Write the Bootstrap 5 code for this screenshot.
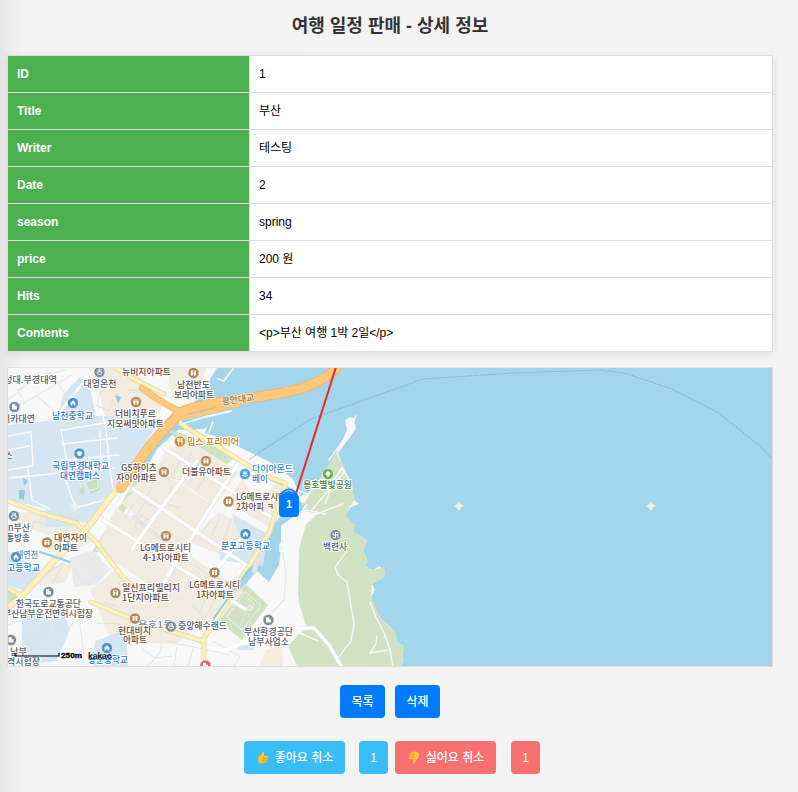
<!DOCTYPE html>
<html lang="ko">
<head>
<meta charset="utf-8">
<meta name="viewport" content="width=device-width, initial-scale=1">
<title>여행 일정 판매 - 상세 정보</title>
<link href="https://cdn.jsdelivr.net/npm/bootstrap@5.3.0/dist/css/bootstrap.min.css" rel="stylesheet">
<style>
body{background:linear-gradient(to right,#e6e6e6,#ececec 8px,#f3f3f3 22px,#f4f4f4);font-family:"Liberation Sans","Noto Sans CJK KR",sans-serif;font-size:12px;color:#000;min-height:792px;overflow:hidden}
.page{width:766px;margin-left:7px}
.page-title{font-size:18px;line-height:26px;padding-top:13px;margin-bottom:16px;color:#333}
.detail{border-collapse:collapse;table-layout:fixed;background:#fff;box-shadow:0 2px 8px rgba(0,0,0,.1);margin-bottom:15px;line-height:18px}
.detail th,.detail td{border:1px solid #ddd;height:37px;padding:0 9px;vertical-align:middle}
.detail th{width:242px;background:#4caf50;color:#fff}
.map-box{border:1px solid #ddd;height:300px;margin-bottom:18px}
.act{height:33px;border:0;border-radius:4px;font-size:12px;font-weight:500;padding:0;color:#fff;display:flex;align-items:center;justify-content:center;line-height:18px}
.act-main{background:#007bff;width:45px}
.like{background:#38bdf8}.dislike{background:#f87171}
.vote{width:101px;gap:6px;padding-left:1px}.count{width:29px}
.btns{gap:10px;margin-bottom:23px}
.votes{padding-left:4px}
.vote.like{margin-right:14px}
.vote.dislike{margin-left:7px;margin-right:15px}
.lbl{font-family:"Noto Sans CJK KR",sans-serif;font-size:9.2px;font-weight:500;paint-order:stroke;stroke:#fff;stroke-width:2px;stroke-linejoin:round}
</style>
<script src="https://cdn.jsdelivr.net/npm/bootstrap@5.3.0/dist/js/bootstrap.bundle.min.js"></script>
</head>
<body>
<main class="page">
<h1 class="page-title text-center fw-bold">여행 일정 판매 - 상세 정보</h1>
<table class="detail w-100">
<tbody>
<tr><th>ID</th><td>1</td></tr>
<tr><th>Title</th><td>부산</td></tr>
<tr><th>Writer</th><td>테스팅</td></tr>
<tr><th>Date</th><td>2</td></tr>
<tr><th>season</th><td>spring</td></tr>
<tr><th>price</th><td>200 원</td></tr>
<tr><th>Hits</th><td>34</td></tr>
<tr><th>Contents</th><td>&lt;p&gt;부산 여행 1박 2일&lt;/p&gt;</td></tr>
</tbody>
</table>
<div class="map-box">
<svg class="d-block" width="764" height="298" viewBox="8 368 764 298" fill="none" stroke-linecap="round" stroke-linejoin="round">
<rect x="8" y="368" width="764" height="298" fill="#a3d5eb"/>
<!-- land -->
<path fill="#f8f8f8" d="M8 368H217L208 382 190 408 176 421 148 456 128 488 146 468 158 448 178 430 204 429 207 427 205 433 221 438 270 462 293 479 300 496 308 494 321 478 337 452 347 430 345 420 350 417 354 418 356 429 338 453 343 466 352 485 354 500 359 504 351 507 345 515 348 522 355 525 353 531 361 537 367 540 363 550 367 560 365 566 373 570 380 566 385 572 384 577 372 584 375 590 371 597 374 609 381 619 387 624 395 632 397 643 404 646 400 653 403 660 401 666H8Z"/>
<path fill="#a3d5eb" d="M292 498L305 504 302 511 294 516 281 526 281 547 279 565 269 582 257 571 235 596 214 624 211 621 250 563 270 530 281 515Z"/>
<!-- parks and woodland -->
<path fill="#d1e2c2" d="M336 453L343 465 334 478 313 504 303 505 320 478ZM342 470L352 485 354 500 345 515 333 519 321 514 303 511 312 500 331 486ZM345 515L355 525 353 531 367 540 363 550 367 560 365 566 373 570 385 567 384 577 372 584 371 597 381 619 395 632 397 643 404 646 402 666H297L288 646 298 635 307 628 298 600 299 549 306 524 320 512Z"/>
<path fill="#d1e2c2" d="M246 584L268 605 242 640 219 621ZM266 474L292 488 294 492 270 481ZM8 590L18 596 8 607Z"/>
<path fill="#d1e2c2" d="M139 474L92 552 99 552 143 482ZM170 430L202 440 235 458 221 468 178 443ZM36 620L54 611 58 617 41 626Z"/>
<!-- residential blocks -->
<path fill="#f2ebe0" d="M89 368H130L164 400 160 412 135 430 107 420 100 405ZM166 449L192 442 239 472 215 506 159 467ZM159 470L213 505 183 553 121 503ZM116 507L178 550 158 590 96 550ZM219 512L256 531 225 556 188 542ZM258 508L276 483 286 492 281 510 268 526 226 502 243 478ZM185 552L244 592 212 627 158 603ZM64 524L90 530 92 543 62 554 44 550ZM90 590L115 570 200 625 176 644 111 641ZM9 514L48 510 75 526 48 535 22 526ZM40 570L74 561 65 583 38 585ZM266 650L282 643 283 666H259ZM168 368H206L197 401 170 389ZM128 492L163 459 141 492Z"/>
<!-- campuses -->
<path fill="#d5e6f2" d="M8 425L57 420 63 395 80 377 90 388 96 416 135 416 158 422 145 446 122 478 106 506 90 524 44 508 8 500ZM8 552L33 565 40 575 29 592 8 586ZM232 514L268 534 263 566 220 560 219 552 240 541ZM22 610L63 612 70 629 57 661 22 665ZM95 641L126 630 128 666H92ZM46 508L77 508 79 525 45 528ZM239 645H254V650H237Z"/>
<path fill="#e9eae9" d="M70 558L93 550 110 570 96 585 74 587Z"/>
<path fill="#c8dfbb" d="M85 482L99 476 100 489 91 494ZM80 488L84 486 84 495 79 492Z"/>
<path fill="#92cae5" d="M19 490H25L24 500 19 498ZM23 478L28 481 24 486ZM115 395L121 397 118 404Z"/>
<!-- minor streets -->
<g stroke="#fdfdfd" stroke-width="1.3">
<path stroke="#e9e9e8" d="M8 400L35 378 65 370M26 404L17 390 50 372 64 392M8 412L72 375M37 396L58 414"/>
<path stroke="#fff" stroke-width="2.2" d="M61 410L92 372 98 368"/>
<path d="M8 436L31 432 33 466 8 470M29 446L8 450M63 430L115 421M62 444L117 438M62 460L119 455M9 478L115 468M64 475L75 507M61 430L66 458 62 474M93 370L106 430 110 470 114 495M100 431L101 462M75 508L112 498M28 468L32 500 50 509"/>
<path stroke="#e4dfd7" stroke-width="1" d="M111 384L100 393 97 406 109 411 113 399M127 391L149 388 154 400M143 505L135 519 156 528M134 504L125 517M150 514L141 529M152 487L144 502 164 511M172 487L165 503 180 508M180 461L171 477 182 481M192 452L184 469 194 475M166 459L156 473 170 480M211 468L197 490M200 461L190 482M211 519L199 538 223 548M220 517L208 544M232 518L221 546M245 531L233 541M181 577L168 597M192 573L184 591M209 590L200 612M191 604L205 618 215 600M177 566L167 584M196 566L210 577M97 623L118 624 138 634M111 611L131 616M104 602L116 606M123 578L114 593M18 526L31 532 34 521 51 526M45 575L64 562 53 583M57 512L82 522M75 512L85 525M141 515L151 521 145 534 135 527Z"/>
<path stroke="#e5e6e5" stroke-width="1.1" d="M161 626V651L148 666M178 642L174 666M194 646L188 666M213 641L240 657 234 666M167 641L230 655M142 649L155 658 172 656M18 610L33 624 52 618 61 626M22 632L50 617 53 632 26 660M8 625L30 616M250 604L240 626M282 545L286 574 284 600 260 625M94 608L70 626 38 664M80 625L84 654M85 552L96 564M95 557L104 566M75 568L80 580M86 561L98 575 89 584 75 580"/>
</g>
<path d="M298 600L290 545M282 548V527L343 504M347 551L335 567 338 575 347 582 350 600 354 624 351 641 339 657M370 602L376 617 384 633 390 650 393 666M377 636L376 644 370 653 388 650M282 526L306 510 325 514M290 544H280V551H290ZM300 633L318 641M325 504L334 480M311 511L345 471M356 416L345 438 329 460" stroke="#f8f8f8" stroke-width="1.5"/>
<g stroke="#e4e4e2" stroke-width="4.4"><path d="M164 448L258 508 274 519M239 462L210 508 154 598M133 489L246 565 238 573M97 516L245 609M197 461L161 508 132 549M274 520L254 571M244 535L214 573M177 551L134 517M279 628L314 628 329 645 341 666"/><path stroke="#fff" stroke-width="3.2" d="M164 448L258 508 274 519M239 462L210 508 154 598M133 489L246 565 238 573M97 516L245 609M197 461L161 508 132 549M244 535L214 573M205 647L226 650 279 628 314 628 329 645 341 666"/></g>
<!-- main roads -->
<g stroke="#ddd7a4" stroke-width="5"><path d="M8 501L40 513 76 523 95 541 129 585M91 602L132 619 202 641M204 666V638L216 620 250 564 269 533 279 503 286 483 264 475 181 424M8 589L24 596M116 368L132 378 164 394"/><path stroke-width="6.6" d="M119 486L89 526 55 560 22 596 8 608"/><path stroke="#fbf1bb" stroke-width="3.6" d="M8 501L40 513 76 523 95 541 129 585M91 602L132 619 202 641M204 666V638L216 620 250 564 269 533 279 503 286 483 264 475 181 424M8 589L24 596M116 368L132 378 164 394M181 423L164 400"/><path stroke="#fbf1bb" stroke-width="5.2" d="M119 486L89 526 55 560 22 596 8 608"/></g>
<path d="M339 365C310 403 227 393 181 412 153 440 144 453 121 488" stroke="#ecb374" stroke-width="10.4"/>
<path d="M181 412C167 405 154 398 142 388" stroke="#ecb374" stroke-width="6.6"/>
<path d="M339 365C310 403 227 393 181 412 153 440 144 453 121 488" stroke="#fdc879" stroke-width="8.8"/>
<path d="M181 412C167 405 154 398 142 388" stroke="#fdc879" stroke-width="5.2"/>
<path d="M181 418C190 418 210 411 238 405" stroke="#fdc879" stroke-width="4"/>
<path d="M182 424L205 417 231 411M218 379L224 381 233 369M213 422L209 432M270 463L297 490 308 494" stroke="#f8f8f8" stroke-width="1.8"/>
<path d="M214 618L250 568M40 552L70 562" stroke="#91cce6" stroke-width="2"/>
<!-- football pitch -->
<g stroke="#eef4e6" stroke-width="1"><path d="M246 592L261 606 242 630 227 617ZM248 598L254 604 249 610"/><circle cx="250" cy="608" r="2.5"/><path d="M86 482L98 478 98 488 89 491Z"/></g>
<!-- ferry line, sea marks -->
<path d="M250 459L260 452 311 419 423 379 513 373 600 370 624 373 672 389 717 412 760 446 772 459" stroke="#80acc7" stroke-width="1" stroke-dasharray="1 2"/>
<path fill="#f5f0e9" d="M459 501L460.7 504.3 464 506 460.7 507.7 459 511 457.3 507.7 454 506 457.3 504.3ZM651 501L652.7 504.3 656 506 652.7 507.7 651 511 649.3 507.7 646 506 649.3 504.3ZM75 501L76.7 504.3 80 506 76.7 507.7 75 511 73.3 507.7 70 506 73.3 504.3Z"/>
<text x="222" y="405" fill="#8b7b63" transform="rotate(-8 222 405)" textLength="33" class="lbl" stroke-opacity=".5">광안대교</text>
<g id="labels"></g>
<!-- route and stop -->
<path d="M336 367L294 500" stroke="#e6282e" stroke-width="2"/>
<circle cx="289" cy="498" r="9.5" fill="#1683ee"/>
<path d="M285 492Q289 489 293 492" stroke="#a7d2fa"/>
<rect x="279" y="494" width="20" height="23" rx="4" fill="#007bff"/>
<text x="289" y="508" text-anchor="middle" font-family="Liberation Sans" font-size="11" font-weight="700" fill="#fff">1</text>
<!-- scale -->
<path d="M15 653V656H59V653" stroke="#000" stroke-width="1.2" stroke-linecap="butt"/>
<text x="61" y="658.3" font-family="Liberation Sans" font-size="7.6" font-weight="700" fill="#000" stroke="#000" stroke-width=".3" textLength="21" lengthAdjust="spacingAndGlyphs">250m</text>
<text x="88" y="658.5" font-family="Liberation Sans" font-size="9.5" font-weight="700" fill="#1b1b1b" textLength="24" lengthAdjust="spacingAndGlyphs">kakao</text>
</svg>
</div>
<div class="d-flex justify-content-center btns">
<button class="btn act act-main">목록</button>
<button class="btn act act-main">삭제</button>
</div>
<div class="d-flex justify-content-center votes">
<button class="btn act vote like"><svg width="12" height="13" viewBox="0 0 12 13"><path fill="#fcc435" d="M5.5.6Q7.4.3 7.2 2.5L6.8 4.8H10q1.1.1 1 1.2 0 .7-.5 1 .7.6.3 1.5-.2.6-.7.8.3 1.2-.8 1.6-.1 1.3-1.5 1.3H4.3Q1 11.9.8 9.2.6 6.4 2.7 5.1 4.9 3.5 5.5.6Z"/><path d="M6.3 5.6V11.5M6.5 7H10.6M6.5 9.2H10M6.5 11.1H9" stroke="#e8941d" stroke-width=".8" fill="none"/></svg><span>좋아요 취소</span></button>
<span class="act count like">1</span>
<button class="btn act vote dislike"><svg width="12" height="13" viewBox="0 0 12 13"><g transform="matrix(-1 0 0 -1 12 13)"><path fill="#fcc435" d="M5.5.6Q7.4.3 7.2 2.5L6.8 4.8H10q1.1.1 1 1.2 0 .7-.5 1 .7.6.3 1.5-.2.6-.7.8.3 1.2-.8 1.6-.1 1.3-1.5 1.3H4.3Q1 11.9.8 9.2.6 6.4 2.7 5.1 4.9 3.5 5.5.6Z"/><path d="M6.3 5.6V11.5M6.5 7H10.6M6.5 9.2H10M6.5 11.1H9" stroke="#e8941d" stroke-width=".8" fill="none"/></g></svg><span>싫어요 취소</span></button>
<span class="act count dislike">1</span>
</div>
</main>
<script>
const colors={n:'#535d65',b:'#2677c9',w:'#5d4b42',o:'#c97615',s:'#268dcc',g:'#43803a',t:'#4c94b3',z:'#858c91'};
// start x, middle y, text, width, colour key
const places=[[4,380,'성대.부경대역',53,'n'],[83.5,384,'대영온천',33,'n'],[122,372,'뉴비치아파트',49,'w'],[2,419,'이카대연',33,'n'],[52,415.5,'남천중학교',41,'b'],[115,414,'더비치푸르',41,'w'],[107,424,'지모써밋아파트',57,'w'],[177,385,'남천반도',33,'w'],[174,395,'보라아파트',40,'w'],[187,442,'밉스 프리미어',52,'o'],[182,472,'더블유아파트',49,'w'],[121,468,'GS하이츠',36,'w'],[116,478,'자이아파트',41,'w'],[252,469,'다이아몬드',41,'s'],[252,478.5,'베이',16,'s'],[236,497,'LG메트로시티',50,'w'],[236,506.5,'2차아피 ㅋ',38,'w'],[303,485,'용호별빛공원',49,'g'],[52,466,'국립부경대학교',57,'b'],[60,475.5,'대연캠퍼스',40,'b'],[5,456,'스',8,'n'],[8,528,'n부산',22,'n'],[6,538,'통방송',24,'n'],[54,538,'대연자이',33,'w'],[54,547.5,'아파트',24,'w'],[16,555,'대연천',22,'t'],[7,568,'고등학교',33,'b'],[140,548,'LG메트로시티',51,'w'],[143,558,'4-1차아파트',46,'w'],[221,546,'분포고등학교',49,'b'],[189,585,'LG메트로시티',51,'w'],[196,594.5,'1차아파트',38,'w'],[122,588,'일신프리빌리지',58,'w'],[122,598,'1단지아파트',47,'w'],[16,604,'한국도로교통공단',65,'n'],[3,614,'부산남부운전면허시험장',90,'n'],[138,625,'용호1동',35,'z'],[118,631,'현대비치',33,'w'],[123,640,'아파트',24,'w'],[178,626,'중앙해수랜드',49,'n'],[244,632,'부산환경공단',49,'n'],[248,642,'남부사업소',41,'n'],[323,547,'백련사',24,'n'],[10,652,'남부',17,'n'],[7,662,'격시험장',33,'n'],[88,660,'용문중학교',40,'b']];
const fills={n:'#7b8c99',b:'#4b92d1',w:'#ad8957',o:'#d38a33',s:'#3ca4e3',g:'#70ad4b',r:'#d9626b'};
// glyph: [path, filled]
const glyphs={
building:['M-2.5-2.5H2.5V2.5H.6V1H-.6V2.5H-2.5Z',1],
school:['M-3 .3L0-2.8 3 .3H2.3V2.5H.8V.8H-.8V2.5H-2.3V.3Z',1],
office:['M-2.5 2.5V-2.7H.7V-.8H2.5V2.5Z',1],
tree:['M0-3.2Q3-1.2 2.3.8 1.8 1.6.5 1.4V3H-.5V1.4Q-1.8 1.6-2.3.8-3-1.2 0-3.2Z',1],
fork:['M-1.3-3V3M-2.5-3V-.5H-.1V-3M2-3V3M2-3L1 0H2',0],
spa:['M-2.7 0Q-2.7 2.5 0 2.5T2.7 0M-1.2 0V-2.7M.2 0V-3M1.5 0V-2.7',0],
temple:['M-2.5-2.5V0H2.5V2.5M0-2.5V2.5M0-2.5H2.5V-1M-2.5 2.5H0',0],
ship:['M-2.7 1.6Q0 3.5 2.7 1.6M-2 0L2-2M-2-2L2 0M0-3V1',0],
campus:['M-3.3-.9L0-2.5 3.3-.9 2 0V1.8Q0 3-2 1.8V0Z',1]};
const pins=[[99.5,372,'n','spa'],[14.5,407,'n','office'],[73,403,'b','school'],[136,402,'w','building'],[193.5,373,'w','building'],[180,441.5,'o','fork'],[206,461,'w','building'],[164,472,'w','building'],[245,474,'s','ship'],[228.5,501.5,'w','building'],[328,474,'g','tree'],[79.5,453.5,'b','campus'],[14,516,'n','spa'],[47,542.5,'w','building'],[16,557,'b','school'],[166,536,'w','building'],[245.5,534,'b','school'],[214.5,572.5,'w','building'],[115.5,593,'w','building'],[48.5,592,'n','office'],[135,618.5,'w','building'],[171,626.5,'n','spa'],[268.5,620,'n','office'],[335.5,535,'n','temple'],[11,640,'n','office'],[107,648,'b','school'],[205.5,665.5,'r','office']];
const pin=([x,y,c,g])=>{
  const [d,solid]=glyphs[g];
  const detail=g==='building'?`<path d="M-1.2-1.3H1.2M0-2V1" stroke="${fills[c]}" stroke-width=".6"/>`:'';
  return `<g transform="translate(${x} ${y})"><circle r="5.6" fill="${fills[c]}" stroke="#fff" stroke-opacity=".6"/><path d="${d}" ${solid?'fill="#fff"':'stroke="#fff" stroke-width=".9"'}/>${detail}</g>`;
};
document.getElementById('labels').innerHTML=places.map(([x,y,t,w,c])=>`<text class="lbl" x="${x}" y="${y+3.4}" textLength="${w}" lengthAdjust="spacingAndGlyphs" fill="${colors[c]}">${t}</text>`).join('')+pins.map(pin).join('');
</script>
</body>
</html>
